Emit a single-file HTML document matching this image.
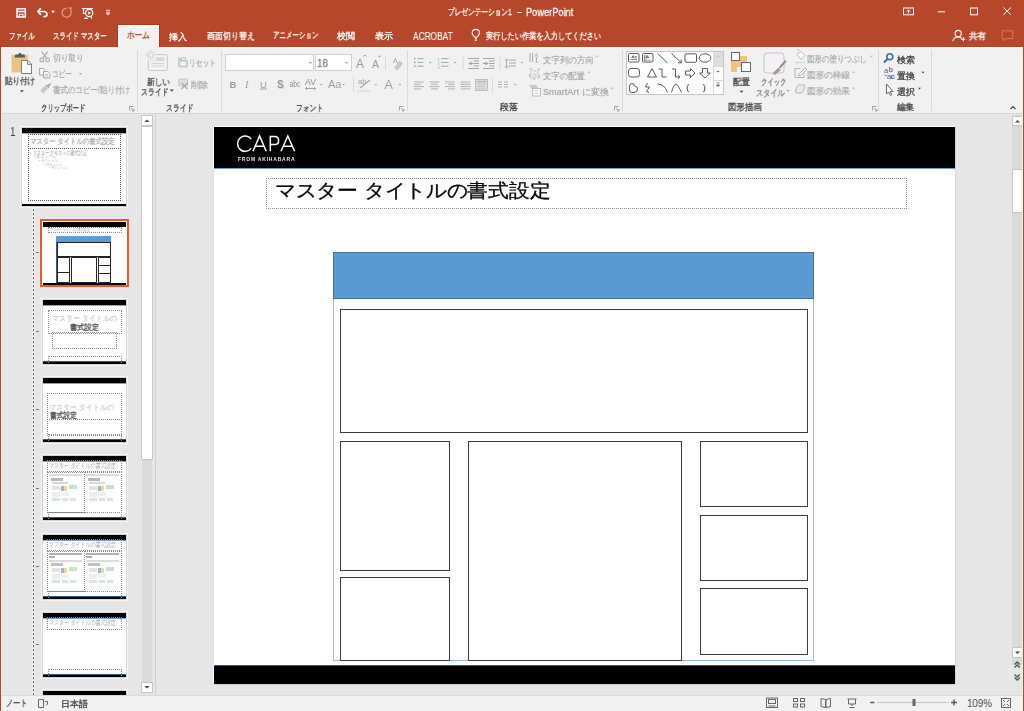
<!DOCTYPE html>
<html><head><meta charset="utf-8">
<style>
*{box-sizing:border-box}
html,body{margin:0;padding:0;width:1024px;height:711px;overflow:hidden;background:#e6e6e6;font-family:"Liberation Sans",sans-serif}
.a{position:absolute}
.t{position:absolute;white-space:nowrap;transform-origin:0 0;-webkit-text-stroke:0.3px currentColor;will-change:transform}
svg{position:absolute;overflow:visible;will-change:transform}
.bx{position:absolute;border:1px solid #3c3c3c;background:#fff}
.dot{position:absolute;border:1px dotted #8a8a8a}
.thumb{position:absolute;background:#fff;border:1px solid #d4d4d4;outline:1px solid #f4f4f4}
</style></head><body>
<!-- frame -->
<div class="a" style="left:0;top:0;width:1024px;height:47px;background:#b7472a"></div>
<div class="a" style="left:117px;top:24px;width:43px;height:23px;background:#a8391e"></div>
<div class="a" style="left:118px;top:25px;width:41px;height:22px;background:#fbfbfb"></div>
<div class="a" style="left:119px;top:26px;width:39px;height:22px;background:#f1f1f1"></div>
<div class="a" style="left:1px;top:47px;width:1022px;height:67px;background:#f1f1f1;border-top:1px solid #fbfbfb;border-bottom:1px solid #d5d5d5"></div>
<div class="a" style="left:119px;top:47px;width:39px;height:2px;background:#f1f1f1"></div>
<!-- group separators -->
<div class="a" style="left:137px;top:50px;width:1px;height:61px;background:#d9d9d9"></div>
<div class="a" style="left:221px;top:50px;width:1px;height:61px;background:#d9d9d9"></div>
<div class="a" style="left:407px;top:50px;width:1px;height:61px;background:#d9d9d9"></div>
<div class="a" style="left:622px;top:50px;width:1px;height:61px;background:#d9d9d9"></div>
<div class="a" style="left:878px;top:50px;width:1px;height:61px;background:#d9d9d9"></div>
<div class="a" style="left:931px;top:50px;width:1px;height:61px;background:#d9d9d9"></div>

<!-- left pane separator -->
<div class="a" style="left:155px;top:114px;width:1px;height:581px;background:#d0d0d0"></div>
<!-- left scrollbar -->
<div class="a" style="left:141px;top:115px;width:12px;height:578px;background:#dadada;border:1px solid #e6e6e6"></div>
<div class="a" style="left:141px;top:115px;width:12px;height:11px;background:#fff;border:1px solid #c6c6c6"></div>
<div class="a" style="left:141px;top:126px;width:12px;height:334px;background:#fff;border:1px solid #c6c6c6;border-radius:1px"></div>
<div class="a" style="left:141px;top:682px;width:12px;height:11px;background:#fff;border:1px solid #c6c6c6"></div>
<svg style="left:141px;top:115px" width="12" height="11"><path d="M3.5 7 L6 4.5 L8.5 7 Z" fill="#444"/></svg>
<svg style="left:141px;top:682px" width="12" height="11"><path d="M3.5 4 L6 6.5 L8.5 4 Z" fill="#444"/></svg>

<!-- right scrollbar -->
<div class="a" style="left:1012px;top:115px;width:11px;height:550px;background:#dadada"></div>
<div class="a" style="left:1012px;top:116px;width:11px;height:10px;background:#fff;border:1px solid #c6c6c6"></div>
<div class="a" style="left:1012px;top:169px;width:11px;height:44px;background:#fff;border:1px solid #c6c6c6"></div>
<div class="a" style="left:1012px;top:647px;width:11px;height:11px;background:#fff;border:1px solid #c6c6c6"></div>
<svg style="left:1012px;top:116px" width="11" height="10"><path d="M3 6.5 L5.5 4 L8 6.5 Z" fill="#444"/></svg>
<svg style="left:1012px;top:647px" width="11" height="11"><path d="M3 4.5 L5.5 7 L8 4.5 Z" fill="#444"/></svg>
<svg style="left:1012px;top:660px" width="11" height="30"><path d="M2.6 4.6 L5.2 2 L7.8 4.6 M2.6 7.6 L5.2 5 L7.8 7.6" stroke="#555" stroke-width="1.4" fill="none"/><path d="M2.6 14.4 L5.2 17 L7.8 14.4 M2.6 17.4 L5.2 20 L7.8 17.4" stroke="#555" stroke-width="1.4" fill="none"/></svg>


<!-- ===== main slide ===== -->
<div class="a" style="left:213px;top:126px;width:743px;height:559px;background:#d8d8d8"></div>
<div class="a" style="left:213px;top:126px;width:742px;height:558px;background:#fff"></div>
<div class="a" style="left:214px;top:127px;width:741px;height:41px;background:#000"></div>
<div class="a" style="left:214px;top:168px;width:741px;height:1px;background:#6d9bd0"></div>
<div class="a" style="left:214px;top:665px;width:741px;height:1px;background:#2f5b8a"></div>
<div class="a" style="left:213px;top:169px;width:1px;height:496px;background:#dcdcdc"></div>
<div class="a" style="left:214px;top:666px;width:741px;height:18px;background:#000"></div>
<svg style="left:230px;top:130px" width="80" height="36">
 <g stroke="#fff" stroke-width="1.5" fill="none" stroke-linejoin="miter">
  <path d="M21.2 9 A7.6 7.7 0 1 0 21.2 18.4"/>
  <path d="M23 21.3 L29.6 6 L36.2 21.3 M25.4 16.2 L33.8 16.2"/>
  <path d="M40.3 21.3 L40.3 6.4 L44.6 6.4 Q48.6 6.4 48.6 10.4 Q48.6 14.5 44.6 14.5 L40.3 14.5"/>
  <path d="M51 21.3 L57.8 6 L64.6 21.3 M53.5 16.2 L62.1 16.2"/>
 </g>
 <text x="8" y="31.2" font-family="Liberation Sans" font-size="5" font-weight="bold" fill="#e8e8e8" textLength="56.5" lengthAdjust="spacing">FROM AKIHABARA</text>
</svg>
<!-- title placeholder -->
<div class="dot" style="left:266px;top:178px;width:641px;height:31px"></div>
<!-- container -->
<div class="a" style="left:333px;top:252px;width:481px;height:409px;border:1px solid #9fb8d6;background:#fff"></div>
<div class="a" style="left:333px;top:252px;width:481px;height:47px;background:#5b9bd5;border:1px solid #41719c"></div>
<div class="bx" style="left:340px;top:309px;width:468px;height:124px"></div>
<div class="bx" style="left:340px;top:441px;width:110px;height:130px"></div>
<div class="bx" style="left:340px;top:577px;width:110px;height:84px"></div>
<div class="bx" style="left:468px;top:441px;width:214px;height:220px"></div>
<div class="bx" style="left:700px;top:441px;width:108px;height:66px"></div>
<div class="bx" style="left:700px;top:515px;width:108px;height:66px"></div>
<div class="bx" style="left:700px;top:588px;width:108px;height:67px"></div>

<!-- ===== thumbnails ===== -->
<!-- dotted connector -->
<div class="a" style="left:32px;top:208px;width:3px;height:487px;background-image:linear-gradient(#fafafa 75%,transparent 75%);background-size:3px 4px;opacity:.7"></div>
<div class="a" style="left:33px;top:209px;width:1px;height:486px;background-image:linear-gradient(#5a5a5a 50%,transparent 50%);background-size:1px 4px"></div>
<!-- master thumb -->
<div class="thumb" style="left:21px;top:127px;width:106px;height:80px"></div>
<div class="a" style="left:22px;top:128px;width:104px;height:5px;background:#000"></div>
<div class="a" style="left:22px;top:133px;width:104px;height:1px;background:#8fb0d8"></div>
<div class="a" style="left:22px;top:204px;width:104px;height:2px;background:#000"></div>
<div class="dot" style="left:28px;top:134px;width:93px;height:15px;border-color:#555"></div>
<div class="dot" style="left:28px;top:148px;width:93px;height:53px;border-color:#555"></div>

<!-- selected layout thumb -->
<div class="a" style="left:40px;top:219px;width:89px;height:68px;border:2px solid #e8582f;background:#fff"></div>
<div class="a" style="left:42px;top:221px;width:85px;height:64px;border:1px solid #fff"></div>
<div class="a" style="left:43px;top:222px;width:83px;height:5px;background:#000"></div>
<div class="dot" style="left:48px;top:227px;width:74px;height:6px;border-color:#888"></div>

<div class="a" style="left:56px;top:236px;width:55px;height:48px;border:1px solid #3a5f86;background:#fff"></div>
<div class="a" style="left:56px;top:236px;width:55px;height:6px;background:#5b9bd5"></div>
<div class="a" style="left:57px;top:242px;width:54px;height:15px;border:1px solid #222;background:#fff"></div>
<div class="a" style="left:57px;top:257px;width:13px;height:16px;border:1px solid #222"></div>
<div class="a" style="left:57px;top:272px;width:13px;height:11px;border:1px solid #222"></div>
<div class="a" style="left:71px;top:257px;width:26px;height:26px;border:1px solid #222"></div>
<div class="a" style="left:98px;top:257px;width:13px;height:9px;border:1px solid #222"></div>
<div class="a" style="left:98px;top:265px;width:13px;height:9px;border:1px solid #222"></div>
<div class="a" style="left:98px;top:273px;width:13px;height:10px;border:1px solid #222"></div>
<div class="a" style="left:43px;top:283px;width:83px;height:2px;background:#000"></div>

<div class="thumb" style="left:42px;top:299px;width:85px;height:66px"></div>
<div class="a" style="left:43px;top:300px;width:83px;height:5px;background:#000"></div>
<div class="a" style="left:43px;top:305px;width:83px;height:1px;background:#7aa3d4"></div>
<div class="a" style="left:43px;top:361px;width:83px;height:1px;background:#35557a"></div>
<div class="a" style="left:43px;top:362px;width:83px;height:2px;background:#000"></div>
<div class="dot" style="left:48px;top:356px;width:74px;height:7px;border-color:#888;border-bottom:none"></div>
<div class="dot" style="left:48px;top:310px;width:74px;height:24px;border-color:#888"></div>
<div class="dot" style="left:52px;top:332px;width:65px;height:17px;border-color:#888"></div>
<div class="thumb" style="left:42px;top:377px;width:85px;height:66px"></div>
<div class="a" style="left:43px;top:378px;width:83px;height:5px;background:#000"></div>
<div class="a" style="left:43px;top:383px;width:83px;height:1px;background:#7aa3d4"></div>
<div class="a" style="left:43px;top:439px;width:83px;height:1px;background:#35557a"></div>
<div class="a" style="left:43px;top:440px;width:83px;height:2px;background:#000"></div>
<div class="dot" style="left:48px;top:434px;width:74px;height:7px;border-color:#888;border-bottom:none"></div>
<div class="dot" style="left:47px;top:393px;width:75px;height:27px;border-color:#888"></div>
<div class="dot" style="left:47px;top:419px;width:75px;height:17px;border-color:#888"></div>
<div class="thumb" style="left:42px;top:455px;width:85px;height:66px"></div>
<div class="a" style="left:43px;top:456px;width:83px;height:5px;background:#000"></div>
<div class="a" style="left:43px;top:461px;width:83px;height:1px;background:#7aa3d4"></div>
<div class="a" style="left:43px;top:517px;width:83px;height:1px;background:#35557a"></div>
<div class="a" style="left:43px;top:518px;width:83px;height:2px;background:#000"></div>
<div class="dot" style="left:48px;top:512px;width:74px;height:7px;border-color:#888;border-bottom:none"></div>
<div class="dot" style="left:47px;top:460px;width:75px;height:12px;border-color:#888"></div>
<div class="dot" style="left:47px;top:472px;width:38px;height:41px;border-color:#888"></div>
<div class="dot" style="left:84px;top:472px;width:38px;height:41px;border-color:#888"></div>
<div class="a" style="left:49px;top:474px;width:33px;height:2px;background:#dedede"></div>
<div class="a" style="left:51px;top:478px;width:12px;height:3px;background:#b8b8b8"></div>
<div class="a" style="left:52px;top:482px;width:16px;height:2px;background:#d8d8d8"></div>
<div class="a" style="left:52px;top:486px;width:8px;height:4px;background:#e3e3e3"></div>
<div class="a" style="left:61px;top:486px;width:3px;height:5px;background:#9db4d9"></div>
<div class="a" style="left:64px;top:486px;width:3px;height:5px;background:#f0d89c"></div>
<div class="a" style="left:69px;top:485px;width:8px;height:4px;background:#c4e2cd"></div>
<div class="a" style="left:52px;top:492px;width:8px;height:5px;background:#eeeeee"></div>
<div class="a" style="left:61px;top:492px;width:8px;height:4px;background:#f0f0f0"></div>
<div class="a" style="left:52px;top:498px;width:8px;height:3px;background:#d9e4f3"></div>
<div class="a" style="left:62px;top:498px;width:6px;height:3px;background:#d9e4f3"></div>
<div class="a" style="left:70px;top:498px;width:6px;height:3px;background:#d9e4f3"></div>
<div class="a" style="left:86px;top:474px;width:33px;height:2px;background:#dedede"></div>
<div class="a" style="left:88px;top:478px;width:12px;height:3px;background:#b8b8b8"></div>
<div class="a" style="left:89px;top:482px;width:16px;height:2px;background:#d8d8d8"></div>
<div class="a" style="left:89px;top:486px;width:8px;height:4px;background:#e3e3e3"></div>
<div class="a" style="left:98px;top:486px;width:3px;height:5px;background:#9db4d9"></div>
<div class="a" style="left:101px;top:486px;width:3px;height:5px;background:#f0d89c"></div>
<div class="a" style="left:106px;top:485px;width:8px;height:4px;background:#c4e2cd"></div>
<div class="a" style="left:89px;top:492px;width:8px;height:5px;background:#eeeeee"></div>
<div class="a" style="left:98px;top:492px;width:8px;height:4px;background:#f0f0f0"></div>
<div class="a" style="left:89px;top:498px;width:8px;height:3px;background:#d9e4f3"></div>
<div class="a" style="left:99px;top:498px;width:6px;height:3px;background:#d9e4f3"></div>
<div class="a" style="left:107px;top:498px;width:6px;height:3px;background:#d9e4f3"></div>
<div class="thumb" style="left:42px;top:534px;width:85px;height:66px"></div>
<div class="a" style="left:43px;top:535px;width:83px;height:5px;background:#000"></div>
<div class="a" style="left:43px;top:540px;width:83px;height:1px;background:#7aa3d4"></div>
<div class="a" style="left:43px;top:596px;width:83px;height:1px;background:#35557a"></div>
<div class="a" style="left:43px;top:597px;width:83px;height:2px;background:#000"></div>
<div class="dot" style="left:48px;top:591px;width:74px;height:7px;border-color:#888;border-bottom:none"></div>
<div class="dot" style="left:47px;top:539px;width:75px;height:12px;border-color:#888"></div>
<div class="dot" style="left:47px;top:551px;width:38px;height:41px;border-color:#888"></div>
<div class="dot" style="left:84px;top:551px;width:38px;height:41px;border-color:#888"></div>
<div class="a" style="left:49px;top:553px;width:33px;height:2px;background:#b0b0b0"></div>
<div class="a" style="left:49px;top:556px;width:6px;height:2px;background:#b0b0b0"></div>
<div class="a" style="left:49px;top:560px;width:33px;height:2px;background:#dcdcdc"></div>
<div class="a" style="left:51px;top:563px;width:12px;height:3px;background:#c0c0c0"></div>
<div class="a" style="left:52px;top:568px;width:8px;height:4px;background:#e3e3e3"></div>
<div class="a" style="left:61px;top:568px;width:3px;height:5px;background:#9db4d9"></div>
<div class="a" style="left:64px;top:568px;width:3px;height:5px;background:#f0d89c"></div>
<div class="a" style="left:69px;top:567px;width:8px;height:4px;background:#c4e2cd"></div>
<div class="a" style="left:52px;top:574px;width:8px;height:5px;background:#eeeeee"></div>
<div class="a" style="left:61px;top:574px;width:8px;height:4px;background:#f0f0f0"></div>
<div class="a" style="left:52px;top:580px;width:8px;height:3px;background:#d9e4f3"></div>
<div class="a" style="left:62px;top:580px;width:6px;height:3px;background:#d9e4f3"></div>
<div class="a" style="left:70px;top:580px;width:6px;height:3px;background:#d9e4f3"></div>
<div class="a" style="left:86px;top:553px;width:33px;height:2px;background:#b0b0b0"></div>
<div class="a" style="left:86px;top:556px;width:6px;height:2px;background:#b0b0b0"></div>
<div class="a" style="left:86px;top:560px;width:33px;height:2px;background:#dcdcdc"></div>
<div class="a" style="left:88px;top:563px;width:12px;height:3px;background:#c0c0c0"></div>
<div class="a" style="left:89px;top:568px;width:8px;height:4px;background:#e3e3e3"></div>
<div class="a" style="left:98px;top:568px;width:3px;height:5px;background:#9db4d9"></div>
<div class="a" style="left:101px;top:568px;width:3px;height:5px;background:#f0d89c"></div>
<div class="a" style="left:106px;top:567px;width:8px;height:4px;background:#c4e2cd"></div>
<div class="a" style="left:89px;top:574px;width:8px;height:5px;background:#eeeeee"></div>
<div class="a" style="left:98px;top:574px;width:8px;height:4px;background:#f0f0f0"></div>
<div class="a" style="left:89px;top:580px;width:8px;height:3px;background:#d9e4f3"></div>
<div class="a" style="left:99px;top:580px;width:6px;height:3px;background:#d9e4f3"></div>
<div class="a" style="left:107px;top:580px;width:6px;height:3px;background:#d9e4f3"></div>
<div class="thumb" style="left:42px;top:612px;width:85px;height:66px"></div>
<div class="a" style="left:43px;top:613px;width:83px;height:5px;background:#000"></div>
<div class="a" style="left:43px;top:618px;width:83px;height:1px;background:#7aa3d4"></div>
<div class="a" style="left:43px;top:674px;width:83px;height:1px;background:#35557a"></div>
<div class="a" style="left:43px;top:675px;width:83px;height:2px;background:#000"></div>
<div class="dot" style="left:48px;top:669px;width:74px;height:7px;border-color:#888;border-bottom:none"></div>
<div class="dot" style="left:47px;top:617px;width:75px;height:13px;border-color:#888"></div>
<div class="thumb" style="left:42px;top:690px;width:85px;height:10px"></div>
<div class="a" style="left:43px;top:691px;width:83px;height:5px;background:#000"></div>
<div class="a" style="left:43px;top:696px;width:83px;height:1px;background:#7aa3d4"></div>
<div class="a" style="left:36px;top:252px;width:3px;height:1px;background:#777"></div><div class="a" style="left:36px;top:331px;width:3px;height:1px;background:#777"></div><div class="a" style="left:36px;top:409px;width:3px;height:1px;background:#777"></div><div class="a" style="left:36px;top:488px;width:3px;height:1px;background:#777"></div><div class="a" style="left:36px;top:566px;width:3px;height:1px;background:#777"></div><div class="a" style="left:36px;top:644px;width:3px;height:1px;background:#777"></div>
<!-- status bar -->
<div class="a" style="left:1px;top:695px;width:1022px;height:16px;background:#f1f1f1;border-top:1px solid #d9d9d9"></div>

<!-- QAT -->
<svg style="left:0;top:0" width="130" height="24">
 <g fill="none" stroke="#fff" stroke-width="1.5">
  <path d="M17 8.8 H25.3 V16.9 H17 Z"/>
  <path d="M17 11.5 H25.3"/>
 </g>
 <path d="M19.3 17 V14.3 H23 V17" fill="none" stroke="#fff" stroke-width="1.1"/>
 <g fill="none" stroke="#fff" stroke-width="1.7" stroke-linecap="round">
  <path d="M37.8 11.5 L40.5 8.6 M37.8 11.5 L40.5 14.3 M38.2 11.5 H43.5 Q47 11.5 47 14.2 Q47 16.6 44 16.6"/>
 </g>
 <path d="M51 10.8 H55 L53 13.2 Z" fill="#fff"/>
 <g fill="none" stroke="#d99580" stroke-width="1.4">
  <path d="M70.6 10.6 A4.5 4.5 0 1 1 66.8 8.2"/>
  <path d="M68.3 8 H71 V10.7"/>
 </g>
 <g fill="none" stroke="#fff" stroke-width="1.2">
  <path d="M82 8.6 H93"/>
  <path d="M83.5 8.6 V13.3 H85.5"/>
  <circle cx="89.2" cy="13" r="3.6"/>
  <path d="M86.5 17.5 L85 18.6 M84 18.5 H88 M90.7 16.5 L92 18.5"/>
 </g>
 <path d="M88.3 11.2 L91 13 L88.3 14.8 Z" fill="#fff"/>
 <path d="M106 10.3 H110 M106 12.2 H110" stroke="#f3d4ca" stroke-width="1"/>
 <path d="M105.8 13.3 H110.2 L108 15.3 Z" fill="#fff"/>
</svg>
<!-- window controls -->
<svg style="left:890px;top:0" width="134" height="47">
 <g fill="none" stroke="#fff" stroke-width="1">
  <rect x="13.5" y="8" width="10" height="6.8"/>
  <path d="M18.5 13.5 V10 M16.8 11.6 L18.5 9.9 L20.2 11.6"/>
  <path d="M47.8 11.8 H55"/>
  <rect x="80.5" y="8" width="7" height="6.8"/>
  <path d="M113.3 7.5 L121 14.9 M121 7.5 L113.3 14.9"/>
 </g>
 <g fill="none" stroke="#fff" stroke-width="1.1">
  <circle cx="68.2" cy="33.5" r="3.1"/>
  <path d="M62.9 41.2 Q63.5 37 68.2 37 Q70.5 37 71.8 38.3"/>
  <path d="M71.3 39.3 H75.3 M73.3 37.3 V41.3"/>
 </g>
 <path d="M112.2 30.8 H122.8 V38.6 H116 L113.5 40.6 V38.6 H112.2 Z" fill="none" stroke="#d27b65" stroke-width="1"/>
</svg>
<!-- lightbulb -->
<svg style="left:470px;top:26px" width="16" height="18">
 <g fill="none" stroke="#fff" stroke-width="1.1">
  <path d="M5.2 11.4 Q2.2 9.6 2.2 6.8 Q2.2 3.4 5.8 3.4 Q9.4 3.4 9.4 6.8 Q9.4 9.6 6.4 11.4 Z"/>
  <path d="M4.6 12.8 H7 M4.6 14.2 H7"/>
 </g>
</svg>

<!-- ===== Clipboard group ===== -->
<svg style="left:0;top:47px" width="140" height="66">
 <rect x="11.5" y="7.8" width="16.5" height="17.6" fill="#eac37a" stroke="#e8e0cc" stroke-width=".5"/>
 <path d="M14.8 10.5 H25 V9 Q25 7.6 23.5 7.6 H21.5 Q21.3 5.8 19.9 5.8 Q18.5 5.8 18.3 7.6 H16.3 Q14.8 7.6 14.8 9 Z" fill="#5a5a5a"/>
 <path d="M21.6 13.5 H28 L31.5 17 V26.5 H21.6 Z" fill="#fff" stroke="#7a7a7a" stroke-width="1"/>
 <path d="M27.6 13.5 V17.3 H31.5" fill="none" stroke="#7a7a7a" stroke-width="1"/>
 <path d="M20 43.3 H23.8 L21.9 45.5 Z" fill="#444"/>
 <!-- scissors -->
 <g fill="none" stroke="#a9a9a9" stroke-width="1.1">
  <circle cx="41.8" cy="12.9" r="1.9"/><circle cx="47.6" cy="12.9" r="1.9"/>
  <path d="M42.8 11.2 L47.8 4.6 M46.6 11.2 L41.6 4.6"/>
 </g>
 <!-- copy -->
 <g fill="#f6f6f6" stroke="#ababab" stroke-width="1">
  <path d="M39.5 21.5 H43.5 L45 23 V28 H39.5 Z"/>
  <path d="M43.5 24.5 H47.8 L49.8 26.5 V31 H43.5 Z"/>
 </g>
 <path d="M45 27.5 H48 M45 29.2 H48" stroke="#bdbdbd" stroke-width=".8"/>
 <path d="M78.5 26 H82.5 L80.5 28 Z" fill="#bbb"/>
 <!-- format painter -->
 <path d="M40.2 43.5 L45.2 38.3 L48.3 41.3 L43.2 46.8 Z" fill="#c9c9c9"/>
 <path d="M45.5 38 L49.5 37.2 L49 41.5" fill="#b0b0b0"/>
 <path d="M47.5 39.5 L50.8 36.5" stroke="#a0a0a0" stroke-width="1.4"/>
 <!-- launcher -->
 <g fill="none" stroke="#9a9a9a" stroke-width=".9"><path d="M129.5 63.5 V59.5 H133.5"/><path d="M131 61 L134 64 M134 62 V64 H132"/></g>
</svg>

<!-- ===== Slides group ===== -->
<svg style="left:140px;top:47px" width="82" height="66">
 <rect x="8.3" y="7.6" width="19" height="15.8" rx="1.2" fill="#f7f1f7" stroke="#c9c5c9" stroke-width="1"/>
 <rect x="11.5" y="10.4" width="13" height="3.6" fill="#d9d6d9"/>
 <path d="M11.5 16.6 H24.5 M11.5 19 H24.5" stroke="#d4cfd4" stroke-width="1"/>
 <rect x="5" y="2.5" width="11" height="11" fill="#f1f1f1"/><g stroke="#c4c4c4" stroke-width=".9"><path d="M10.5 3 V13 M5.5 8 H15.5 M7 4.5 L14 11.5 M14 4.5 L7 11.5"/></g>
 <circle cx="10.5" cy="8" r="2" fill="#f1f1f1" stroke="#d8d8d8" stroke-width=".6"/>
 <path d="M29.8 42.6 H33.8 L31.8 44.8 Z" fill="#444"/>
 <!-- reset -->
 <g fill="#dcdcdc" stroke="#b8b8b8" stroke-width=".9">
  <rect x="38.5" y="13.5" width="9" height="6.4" rx="1"/>
 </g>
 <path d="M39 12.5 Q41.5 9.8 45 11 L46.5 12" fill="none" stroke="#b5b5b5" stroke-width="1"/>
 <path d="M38 10 L39.2 13 L42 12.2" fill="none" stroke="#b5b5b5" stroke-width="1"/>
 <rect x="41" y="15" width="4" height="3.5" fill="#f4f4f4"/>
 <!-- delete -->
 <rect x="38.6" y="32" width="9" height="7" rx="1" fill="#dedede" stroke="#c2c2c2" stroke-width=".9"/>
 <path d="M41.5 36 L47.5 42 M47.5 36 L41.5 42" stroke="#a8a8a8" stroke-width="1.2"/>
</svg>

<!-- ===== Font group ===== -->
<div class="a" style="left:225px;top:54px;width:89px;height:17px;background:#fff;border:1px solid #d1d1d1"></div>
<div class="a" style="left:315px;top:54px;width:37px;height:17px;background:#fff;border:1px solid #d1d1d1"></div>
<svg style="left:222px;top:47px" width="186" height="66">
 <path d="M86.5 15 H90.5 L88.5 17 Z M122.5 15 H126.5 L124.5 17 Z" fill="#b0b0b0"/>
 <!-- grow/shrink -->
 <text x="134" y="20.5" font-family="Liberation Sans" font-size="12" fill="#9a9a9a">A</text>
 <path d="M141.5 9.5 L143 8 L144.5 9.5" fill="none" stroke="#9a9a9a" stroke-width=".9"/>
 <text x="150" y="20.5" font-family="Liberation Sans" font-size="10.5" fill="#9a9a9a">A</text>
 <path d="M156 8.8 H159 L157.5 10.5 Z" fill="#9a9a9a"/>
 <path d="M163.5 10 V23" stroke="#d9d9d9" stroke-width="1"/>
 <!-- clear formatting -->
 <text x="171" y="16" font-family="Liberation Sans" font-size="7" fill="#a0a0a0">A</text>
 <path d="M172 21 L177.5 13.5 L181 16.5 L175.5 23.5 Z" fill="#c9c9c9"/>
 <!-- row 2 -->
 <text x="7.5" y="40.5" font-family="Liberation Sans" font-size="9.5" font-weight="bold" fill="#9c9c9c">B</text>
 <text x="23" y="40.5" font-family="Liberation Serif" font-size="10.5" font-style="italic" fill="#a0a0a0">I</text>
 <text x="38" y="40.5" font-family="Liberation Sans" font-size="9.5" fill="#9c9c9c">U</text>
 <path d="M38 42 H45" stroke="#8f8f8f" stroke-width=".8"/>
 <text x="55.8" y="41.6" font-family="Liberation Sans" font-size="10" font-weight="bold" fill="#d4d4d4">S</text>
 <text x="55" y="40.5" font-family="Liberation Sans" font-size="10" font-weight="bold" fill="#9c9c9c">S</text>
 <text x="67.5" y="40" font-family="Liberation Sans" font-size="9" fill="#909090" textLength="11" lengthAdjust="spacingAndGlyphs">abc</text>
 <text x="83" y="38" font-family="Liberation Sans" font-size="8.5" fill="#909090" textLength="11" lengthAdjust="spacingAndGlyphs">AV</text>
 <path d="M83.5 41.5 H93.5 M85 40 L83.5 41.5 L85 43 M92 40 L93.5 41.5 L92 43" fill="none" stroke="#909090" stroke-width=".8"/>
 <path d="M97.5 37 H100.5 L99 38.6 Z M120 37 H123 L121.5 38.6 Z M152.3 37 H155.3 L153.8 38.6 Z M176.5 37 H179.5 L178 38.6 Z" fill="#a8a8a8"/>
 <text x="106" y="40.5" font-family="Liberation Sans" font-size="11" fill="#a0a0a0">Aa</text>
 <path d="M131.5 30 V45" stroke="#d9d9d9" stroke-width="1"/>
 <text x="136" y="37" font-family="Liberation Sans" font-size="7.5" fill="#a0a0a0">ab</text>
 <path d="M138 41 L148 33" stroke="#a8a8a8" stroke-width="1.3"/>
 <path d="M136 44 H148" stroke="#e8d3e8" stroke-width="1.4"/>
 <text x="162.5" y="42" font-family="Liberation Sans" font-size="12.5" fill="#a0a0a0">A</text>
 <g fill="none" stroke="#9a9a9a" stroke-width=".9"><path d="M177.5 63.5 V59.5 H181.5"/><path d="M179 61 L182 64 M182 62 V64 H180"/></g>
</svg>

<!-- ===== Paragraph group ===== -->
<svg style="left:405px;top:47px" width="220" height="66">
 <g transform="translate(0,4)">
 <g fill="#a6a6a6">
  <rect x="9" y="6.8" width="1.6" height="1.6"/><rect x="9" y="10.6" width="1.6" height="1.6"/><rect x="9" y="14.4" width="1.6" height="1.6"/>
 </g>
 <path d="M12.5 7.6 H18.5 M12.5 11.4 H18.5 M12.5 15.2 H18.5" stroke="#a6a6a6" stroke-width="1"/>
 <path d="M23.8 11 H26.8 L25.3 12.6 Z M48.5 11 H51.5 L50 12.6 Z M115.5 11 H118.5 L117 12.6 Z" fill="#a8a8a8"/>
 <text x="32.5" y="9.5" font-family="Liberation Sans" font-size="3.8" fill="#a6a6a6">1</text>
 <text x="32.5" y="13.5" font-family="Liberation Sans" font-size="3.8" fill="#a6a6a6">2</text>
 <text x="32.5" y="17.5" font-family="Liberation Sans" font-size="3.8" fill="#a6a6a6">3</text>
 <path d="M36 7.6 H43.5 M36 11.4 H43.5 M36 15.2 H43.5" stroke="#a6a6a6" stroke-width="1"/>
 <path d="M58 4 V19 M95 4 V19" stroke="#d9d9d9" stroke-width="1"/>
 <!-- indents -->
 <path d="M63 7.5 H74 M68.5 10 H74 M68.5 12.5 H74 M68.5 15 H74 M63 17.5 H74" stroke="#a6a6a6" stroke-width="1"/>
 <path d="M66.5 10.5 L63.5 12.5 L66.5 14.5 Z" fill="#a0a0a0"/><path d="M64.5 12.5 H68" stroke="#a0a0a0" stroke-width="1.1"/>
 <path d="M78 7.5 H89.5 M84 10 H89.5 M84 12.5 H89.5 M84 15 H89.5 M78 17.5 H89.5" stroke="#a6a6a6" stroke-width="1"/>
 <path d="M80.5 10.5 L83.5 12.5 L80.5 14.5 Z" fill="#a0a0a0"/><path d="M78 12.5 H81" stroke="#a0a0a0" stroke-width="1.1"/>
 <!-- line spacing -->
 <path d="M104 9 H111 M104 12 H111 M104 15 H111" stroke="#a6a6a6" stroke-width="1"/>
 <path d="M101.5 8.5 V16.5 M100 9.8 L101.5 7.8 L103 9.8 M100 15.2 L101.5 17.2 L103 15.2" fill="none" stroke="#a6a6a6" stroke-width=".9"/>
  </g>
 <!-- row 2 aligns -->
 <path d="M9 35 H19 M9 37.3 H16 M9 39.6 H19 M9 41.9 H16" stroke="#b0b0b0" stroke-width="1"/>
 <path d="M24.5 35 H34.5 M26 37.3 H33 M24.5 39.6 H34.5 M26 41.9 H33" stroke="#b0b0b0" stroke-width="1"/>
 <path d="M40 35 H50 M43 37.3 H50 M40 39.6 H50 M43 41.9 H50" stroke="#b0b0b0" stroke-width="1"/>
 <path d="M55.5 35 H65.5 M55.5 37.3 H65.5 M55.5 39.6 H65.5 M55.5 41.9 H65.5" stroke="#b0b0b0" stroke-width="1"/>
 <rect x="70.5" y="32.5" width="12" height="11" fill="#dcdcdc" stroke="#b5b5b5" stroke-width=".8"/>
 <path d="M72.5 37 H80.5 M72.5 39.5 H80.5 M72.5 42 H80.5" stroke="#c0c0c0" stroke-width=".8"/>
 <path d="M72.5 34.6 H80.5 M73.5 33.6 L72.5 34.6 L73.5 35.6 M79.5 33.6 L80.5 34.6 L79.5 35.6" stroke="#a0a0a0" stroke-width=".7" fill="none"/>
 <path d="M93 35 H97 M99 35 H103 M93 37.5 H97 M99 37.5 H103 M93 40 H97 M99 40 H103" stroke="#b0b0b0" stroke-width="1"/>
 <path d="M108.8 37 H111.8 L110.3 38.6 Z" fill="#a8a8a8"/>
 <path d="M87.5 31 V46" stroke="#d9d9d9" stroke-width="1"/>
 <!-- text direction -->
 <path d="M125 6 V15 M127.5 6 V15 M131.5 10 V15" stroke="#b0b0b0" stroke-width="1.1"/>
 <text x="129.5" y="10" font-family="Liberation Sans" font-size="6" fill="#a8a8a8">A</text>
 <path d="M131 15 V16 M133 15 V16" stroke="#b0b0b0" stroke-width=".9"/>
 <!-- align text -->
 <rect x="124.5" y="22" width="10" height="10" fill="none" stroke="#b8b8b8" stroke-width="1" stroke-dasharray="3 5"/>
 <path d="M126 22 V32 M133 22 V32" stroke="#c8c8c8" stroke-width="1"/>
 <path d="M127.5 27 H131.5 M127.5 29 H131.5" stroke="#c0c0c0" stroke-width=".8"/>
 <path d="M128.3 24.5 L129.5 23.2 L130.7 24.5 M128.3 30.5 L129.5 31.8 L130.7 30.5" fill="none" stroke="#a8a8a8" stroke-width=".8"/>
 <!-- smartart -->
 <path d="M124 38 H131 L134 42 H127 Z" fill="#c8c8c8"/>
 <rect x="127.5" y="41.5" width="8" height="7.5" fill="#f6f6f6" stroke="#b8b8b8" stroke-width=".9"/>
 <path d="M130 44 H133 M130 46.5 H133" stroke="#c8c8c8" stroke-width=".8"/>
 <path d="M190.5 8.8 H193.5 L192 10.4 Z M182.5 24.8 H185.5 L184 26.4 Z M205.5 40.8 H208.5 L207 42.4 Z" fill="#b8b8b8"/>
 <g fill="none" stroke="#9a9a9a" stroke-width=".9"><path d="M209.5 63.5 V59.5 H213.5"/><path d="M211 61 L214 64 M214 62 V64 H212"/></g>
</svg>

<!-- ===== Drawing group ===== -->
<div class="a" style="left:626px;top:51px;width:98px;height:44px;background:#fff;border:1px solid #c6c6c6"></div>
<div class="a" style="left:714px;top:52px;width:9px;height:14px;background:#dedede"></div>
<div class="a" style="left:713px;top:52px;width:1px;height:42px;background:#dadada"></div>
<div class="a" style="left:714px;top:66px;width:9px;height:1px;background:#dadada"></div>
<div class="a" style="left:714px;top:80px;width:9px;height:1px;background:#dadada"></div>
<svg style="left:620px;top:47px" width="260" height="66">
 <path d="M96 10 L98 8.5 L100 10" fill="none" stroke="#c0c0c0" stroke-width=".8"/>
 <path d="M96.5 24 H99.5 L98 25.6 Z" fill="#555"/>
 <path d="M96.5 36 H99.5 M96.5 38 H99.5 L98 39.6 Z" stroke="#555" stroke-width=".7" fill="#555"/>
 <g fill="none" stroke="#5a5a5a" stroke-width="1">
  <rect x="8.5" y="6.5" width="10.5" height="8.5" rx="1"/>
  <rect x="22.5" y="6.5" width="10.5" height="8.5" rx="1"/>
  <path d="M37.5 6.5 L47.5 16 M51.5 6.5 L61 15.5 M58 15.8 H61.3 V12.5"/>
  <rect x="65" y="6.8" width="11.5" height="8.5" rx="1"/>
  <ellipse cx="85" cy="11" rx="5.8" ry="4.2"/>
  <rect x="8.5" y="21.5" width="11" height="8.5" rx="2.5"/>
  <path d="M27.5 30 L32 21.5 L36.5 30 Z"/>
  <path d="M38.5 22 H42 V30 H46.5"/>
  <path d="M52 22 H55.5 V30 H59.5 M58 28.3 L60 30 L58 31.7"/>
  <path d="M65.5 24 H70.5 V21.5 L75 26 L70.5 30.5 V28 H65.5 Z"/>
  <path d="M82.5 21.5 H87.5 V26 H90.5 L85 31 L79.5 26 H82.5 Z"/>
  <path d="M9.5 43 V39 Q9.5 36.5 12 36.5 Q14.5 36.5 14.5 39 Q17.5 39 17.5 42 Q17.5 45.5 14 45.5 H12 Q9.5 45.5 9.5 43 Z"/>
  <path d="M27.5 36 L25.5 40 L29.5 40 L26.5 44.5 L29 45.5"/>
  <path d="M37.5 37 Q44.5 37 47.5 45.5"/>
  <path d="M51.5 45.5 Q54 36.5 56 37 Q58 37.5 61.5 45.5"/>
  <path d="M69 37.5 Q67.5 37.5 67.5 39.5 V40.5 L66.5 41 L67.5 41.5 V43 Q67.5 45 69 45"/>
  <path d="M83 37.5 Q84.5 37.5 84.5 39.5 V40.5 L85.5 41 L84.5 41.5 V43 Q84.5 45 83 45"/>
 </g>
 <g fill="#4a86c8"><path d="M11 11 L13 8 L15 11 Z"/><path d="M25.5 11 L27.5 8 L29.5 11 Z"/></g>
 <path d="M10.5 12.5 H17 M15 9.5 H17 M15 11 H17" stroke="#5a5a5a" stroke-width=".7"/>
 <path d="M24.5 8 V14 M26 8 V14 M28 12.5 V14 M30 12.5 V14" stroke="#5a5a5a" stroke-width=".7"/>
 <!-- arrange -->
 <rect x="116" y="9" width="11" height="11" fill="#eec679"/>
 <rect x="111" y="14" width="6" height="11" fill="#eec679"/>
 <rect x="111.5" y="5.5" width="8" height="8" fill="#fff" stroke="#666" stroke-width="1"/>
 <rect x="121.5" y="15.5" width="9" height="9" fill="#fff" stroke="#666" stroke-width="1"/>
 <path d="M119.5 43.8 H123.5 L121.5 45.8 Z" fill="#444"/>
 <!-- quick styles -->
 <rect x="144" y="6" width="20" height="20" rx="3" fill="#f6f1f6" stroke="#c4c4c4" stroke-width="1"/>
 <path d="M152.5 26.5 L158.5 20.5 L161 23 L155 28 Z" fill="#9e9e9e"/>
 <path d="M159 20 L165 13 L166.5 14.5 L160.5 21.5 Z" fill="#8e8e8e"/>
 <path d="M166.5 43 H169.5 L168 44.6 Z" fill="#888"/>
 <!-- fill -->
 <path d="M177 7.5 L181 4.5 L185 8.5 L181 12.5 Z" fill="#fff" stroke="#b8b8b8" stroke-width="1"/>
 <path d="M178.5 4 Q178.5 2 177 2.5" fill="none" stroke="#b8b8b8" stroke-width=".9"/>
 <path d="M175 15.5 H185" stroke="#e3cfe3" stroke-width="1.4"/>
 <!-- outline -->
 <path d="M175 21.5 H180 M175 21.5 V30.5 H184 V26" fill="none" stroke="#b5b5b5" stroke-width="1"/>
 <path d="M179 27 L185 21 L186.5 22.5 L180.5 28.5 L178.5 29 Z" fill="#fff" stroke="#a8a8a8" stroke-width=".9"/>
 <!-- effects -->
 <path d="M175.5 43 L177.5 39 Q178 38 179 38 H184 Q185.5 38 185 39.5 L183 44.5 Q182.5 46 181 46 H177 Q175 46 175.5 43 Z" fill="#e9e9e9" stroke="#b5b5b5" stroke-width="1"/>
 <path d="M250 8.8 H253 L251.5 10.4 Z M232 24.8 H235 L233.5 26.4 Z M232 40.8 H235 L233.5 42.4 Z" fill="#b8b8b8"/>
 <g fill="none" stroke="#9a9a9a" stroke-width=".9"><path d="M252.5 63.5 V59.5 H256.5"/><path d="M254 61 L257 64 M257 62 V64 H255"/></g>
</svg>

<!-- ===== Editing group ===== -->
<svg style="left:878px;top:47px" width="146" height="66">
 <circle cx="11.8" cy="9.8" r="3" fill="none" stroke="#2f6db5" stroke-width="1.6"/>
 <path d="M9.5 12 L6.5 15" stroke="#2f6db5" stroke-width="2" stroke-linecap="round"/>
 <text x="6" y="26" font-family="Liberation Sans" font-size="7.5" fill="#555">a</text>
 <text x="10.5" y="25" font-family="Liberation Sans" font-size="7.5" font-weight="bold" fill="#8e5fb8">b</text>
 <text x="9" y="31.5" font-family="Liberation Sans" font-size="7.5" fill="#555">a</text>
 <text x="12.5" y="31.5" font-family="Liberation Sans" font-size="8" font-weight="bold" fill="#2f6db5">c</text>
 <path d="M6.5 27.8 L7.8 29 L9 27.8" fill="none" stroke="#2f6db5" stroke-width=".9"/>
 <path d="M43.5 24.8 H46.5 L45 26.4 Z M40 40.8 H43 L41.5 42.4 Z" fill="#444"/>
 <path d="M8.5 37 V47 L10.5 45 L12.5 48.5 L13.8 47.8 L12 44.5 H15 Z" fill="#fff" stroke="#666" stroke-width="1" stroke-linejoin="round"/>
 <path d="M132.5 62 L135 59.5 L137.5 62" fill="none" stroke="#444" stroke-width="1.2"/>
</svg>

<!-- ===== status bar icons ===== -->
<svg style="left:0;top:695px" width="1024" height="16">
 <g fill="none" stroke="#666" stroke-width="1">
  <path d="M38.5 4.5 H43.5 V12.5 H38.5 Z M45 6.5 H47.5 V9 L46 10.5"/>
  <rect x="766.5" y="3" width="11" height="9.5"/>
  <rect x="768.5" y="4.5" width="7" height="4"/>
  <path d="M768.5 11 H775.5"/>
  <rect x="793.5" y="3.5" width="4" height="3"/><rect x="800.5" y="3.5" width="4" height="3"/>
  <rect x="793.5" y="9" width="4" height="3"/><rect x="800.5" y="9" width="4" height="3"/>
  <path d="M821 3.5 L825.5 4.5 V12.5 L821 11.5 Z M830.5 3.5 L826 4.5 V12.5 L830.5 11.5 Z"/>
  <path d="M847.5 4 H856.5 M848.5 4 V9 H855.5 V4 M852 9 V11 M849.5 12.5 H854.5"/>
  <rect x="1001.5" y="3.5" width="9" height="9"/>
 </g>
 <path d="M870.3 7.5 H874.3 M951 7.5 H957 M954 4.5 V10.5" stroke="#555" stroke-width="1.4"/>
 <path d="M877 7.5 H949" stroke="#c6c6c6" stroke-width="1"/>
 <rect x="912.5" y="4" width="3" height="7" fill="#666"/>
 <path d="M1003 5 L1005 7 M1009 5 L1007 7 M1003 11 L1005 9 M1009 11 L1007 9" stroke="#666" stroke-width="1"/>
</svg>


<div class="t" style="left:448.26px;top:8px;font-size:9px;line-height:9px;color:#ffffff;transform:scaleX(0.741);-webkit-text-stroke:0.3px currentColor">プレゼンテーション1</div>
<div class="t" style="left:517.00px;top:8px;font-size:9px;line-height:9px;color:#ffffff;transform:scaleX(1.667);-webkit-text-stroke:0.3px currentColor">-</div>
<div class="t" style="left:526.16px;top:7px;font-size:11px;line-height:11px;color:#ffffff;transform:scaleX(0.839);-webkit-text-stroke:0.3px currentColor">PowerPoint</div>
<div class="t" style="left:9.29px;top:32px;font-size:9px;line-height:9px;color:#ffffff;transform:scaleX(0.714);-webkit-text-stroke:0.3px currentColor">ファイル</div>
<div class="t" style="left:53.28px;top:32px;font-size:9px;line-height:9px;color:#ffffff;transform:scaleX(0.716);-webkit-text-stroke:0.3px currentColor">スライド マスター</div>
<div class="t" style="left:127.00px;top:31px;font-size:9px;line-height:9px;color:#b7472a;transform:scaleX(0.846);">ホーム</div>
<div class="t" style="left:169.00px;top:33px;font-size:9px;line-height:9px;color:#ffffff;-webkit-text-stroke:0.3px currentColor">挿入</div>
<div class="t" style="left:207.00px;top:32px;font-size:9px;line-height:9px;color:#ffffff;transform:scaleX(0.887);-webkit-text-stroke:0.3px currentColor">画面切り替え</div>
<div class="t" style="left:273.28px;top:31px;font-size:9px;line-height:9px;color:#ffffff;transform:scaleX(0.721);-webkit-text-stroke:0.3px currentColor">アニメーション</div>
<div class="t" style="left:337.00px;top:32px;font-size:9px;line-height:9px;color:#ffffff;-webkit-text-stroke:0.3px currentColor">校閲</div>
<div class="t" style="left:375.00px;top:32px;font-size:9px;line-height:9px;color:#ffffff;-webkit-text-stroke:0.3px currentColor">表示</div>
<div class="t" style="left:413.00px;top:32px;font-size:10px;line-height:10px;color:#ffffff;transform:scaleX(0.833);-webkit-text-stroke:0.1px #fff">ACROBAT</div>
<div class="t" style="left:486.00px;top:32px;font-size:9px;line-height:9px;color:#ffffff;transform:scaleX(0.799);-webkit-text-stroke:0.3px currentColor">実行したい作業を入力してください</div>
<div class="t" style="left:969.00px;top:32px;font-size:9px;line-height:9px;color:#ffffff;transform:scaleX(0.944);-webkit-text-stroke:0.3px currentColor">共有</div>
<div class="t" style="left:5.00px;top:77px;font-size:9px;line-height:9px;color:#444444;transform:scaleX(0.833);">貼り付け</div>
<div class="t" style="left:53.00px;top:54px;font-size:9px;line-height:9px;color:#a3a3a3;transform:scaleX(0.853);-webkit-text-stroke:0.15px currentColor">切り取り</div>
<div class="t" style="left:52.27px;top:70px;font-size:9px;line-height:9px;color:#a3a3a3;transform:scaleX(0.731);-webkit-text-stroke:0.15px currentColor">コピー</div>
<div class="t" style="left:53.00px;top:86px;font-size:9px;line-height:9px;color:#a3a3a3;transform:scaleX(0.828);-webkit-text-stroke:0.15px currentColor">書式のコピー/貼り付け</div>
<div class="t" style="left:41.30px;top:104px;font-size:9px;line-height:9px;color:#444444;transform:scaleX(0.705);">クリップボード</div>
<div class="t" style="left:147.00px;top:78px;font-size:9px;line-height:9px;color:#444444;transform:scaleX(0.852);">新しい</div>
<div class="t" style="left:141.24px;top:88px;font-size:9px;line-height:9px;color:#444444;transform:scaleX(0.765);">スライド</div>
<div class="t" style="left:188.50px;top:59px;font-size:9px;line-height:9px;color:#a3a3a3;transform:scaleX(0.750);-webkit-text-stroke:0.15px currentColor">リセット</div>
<div class="t" style="left:191.00px;top:81px;font-size:9px;line-height:9px;color:#a3a3a3;transform:scaleX(0.944);-webkit-text-stroke:0.15px currentColor">削除</div>
<div class="t" style="left:166.24px;top:104px;font-size:9px;line-height:9px;color:#444444;transform:scaleX(0.765);">スライド</div>
<div class="t" style="left:317.00px;top:59px;font-size:10px;line-height:10px;color:#8a8a8a;">18</div>
<div class="t" style="left:296.24px;top:104px;font-size:9px;line-height:9px;color:#444444;transform:scaleX(0.758);">フォント</div>
<div class="t" style="left:543.00px;top:56px;font-size:9px;line-height:9px;color:#a3a3a3;transform:scaleX(0.943);-webkit-text-stroke:0.15px currentColor">文字列の方向</div>
<div class="t" style="left:543.00px;top:72px;font-size:9px;line-height:9px;color:#a3a3a3;transform:scaleX(0.933);-webkit-text-stroke:0.15px currentColor">文字の配置</div>
<div class="t" style="left:543.00px;top:88px;font-size:9px;line-height:9px;color:#a3a3a3;transform:scaleX(1.015);-webkit-text-stroke:0.15px currentColor">SmartArt に変換</div>
<div class="t" style="left:500.00px;top:103px;font-size:9px;line-height:9px;color:#444444;">段落</div>
<div class="t" style="left:733.00px;top:78px;font-size:9px;line-height:9px;color:#444444;transform:scaleX(0.944);">配置</div>
<div class="t" style="left:761.29px;top:78px;font-size:9px;line-height:9px;color:#808080;transform:scaleX(0.706);-webkit-text-stroke:0.25px currentColor">クイック</div>
<div class="t" style="left:756.20px;top:89px;font-size:9px;line-height:9px;color:#808080;transform:scaleX(0.800);-webkit-text-stroke:0.25px currentColor">スタイル</div>
<div class="t" style="left:807.00px;top:55px;font-size:9px;line-height:9px;color:#a3a3a3;transform:scaleX(0.831);-webkit-text-stroke:0.15px currentColor">図形の塗りつぶし</div>
<div class="t" style="left:807.00px;top:71px;font-size:9px;line-height:9px;color:#a3a3a3;transform:scaleX(0.956);-webkit-text-stroke:0.15px currentColor">図形の枠線</div>
<div class="t" style="left:807.00px;top:87px;font-size:9px;line-height:9px;color:#a3a3a3;transform:scaleX(0.956);-webkit-text-stroke:0.15px currentColor">図形の効果</div>
<div class="t" style="left:728.00px;top:103px;font-size:9px;line-height:9px;color:#444444;transform:scaleX(0.944);">図形描画</div>
<div class="t" style="left:897.00px;top:56px;font-size:9px;line-height:9px;color:#444444;">検索</div>
<div class="t" style="left:897.00px;top:72px;font-size:9px;line-height:9px;color:#444444;">置換</div>
<div class="t" style="left:897.00px;top:88px;font-size:9px;line-height:9px;color:#444444;">選択</div>
<div class="t" style="left:897.00px;top:103px;font-size:9px;line-height:9px;color:#444444;transform:scaleX(0.944);">編集</div>
<div class="t" style="left:6.21px;top:699px;font-size:9px;line-height:9px;color:#444444;transform:scaleX(0.792);">ノート</div>
<div class="t" style="left:61.00px;top:700px;font-size:9px;line-height:9px;color:#444444;">日本語</div>
<div class="t" style="left:967.11px;top:698px;font-size:11px;line-height:11px;color:#444444;transform:scaleX(0.889);-webkit-text-stroke:0">109%</div>
<div class="t" style="left:274.91px;top:181px;font-size:19px;line-height:19px;color:#000000;transform:scaleX(1.092);">マスター タイトルの書式設定</div>
<div class="t" style="left:10.17px;top:126px;font-size:12px;line-height:12px;color:#444444;transform:scaleX(0.833);-webkit-text-stroke:0">1</div>
<div class="t" style="left:30.20px;top:138px;font-size:8px;line-height:8px;color:#a0a0a0;transform:scaleX(0.800);-webkit-text-stroke:0.15px #a0a0a0">マスター タイトルの書式設定</div>
<div class="t" style="left:30.00px;top:150px;font-size:6px;line-height:6px;color:#999999;transform:scaleX(0.687);-webkit-text-stroke:0">• マスター テキストの書式設定</div>
<div class="t" style="left:34.00px;top:154px;font-size:5px;line-height:5px;color:#b0b0b0;transform:scaleX(0.759);-webkit-text-stroke:0">• 第 2 レベル</div>
<div class="t" style="left:39.00px;top:159px;font-size:4px;line-height:4px;color:#b8b8b8;transform:scaleX(0.826);-webkit-text-stroke:0">• 第 3 レベル</div>
<div class="t" style="left:44.00px;top:163px;font-size:4px;line-height:4px;color:#b8b8b8;transform:scaleX(0.783);-webkit-text-stroke:0">• 第 4 レベル</div>
<div class="t" style="left:49.00px;top:166px;font-size:4px;line-height:4px;color:#b8b8b8;transform:scaleX(0.783);-webkit-text-stroke:0">• 第 5 レベル</div>
<div class="t" style="left:50.00px;top:228px;font-size:4px;line-height:4px;color:#999999;transform:scaleX(0.755);-webkit-text-stroke:0">マスター タイトルの書式設定</div>
<div class="t" style="left:52.12px;top:315px;font-size:8px;line-height:8px;color:#b8b8b8;transform:scaleX(0.877);-webkit-text-stroke:0">マスター タイトルの</div>
<div class="t" style="left:70.00px;top:324px;font-size:8px;line-height:8px;color:#555555;transform:scaleX(0.906);-webkit-text-stroke:0.3px #555">書式設定</div>
<div class="t" style="left:49.12px;top:404px;font-size:8px;line-height:8px;color:#b8b8b8;transform:scaleX(0.877);-webkit-text-stroke:0">マスター タイトルの</div>
<div class="t" style="left:50.00px;top:412px;font-size:8px;line-height:8px;color:#555555;transform:scaleX(0.844);-webkit-text-stroke:0.3px #555">書式設定</div>
<div class="t" style="left:49.28px;top:462px;font-size:7px;line-height:7px;color:#a8a8a8;transform:scaleX(0.717);-webkit-text-stroke:0">マスター タイトルの書式設定</div>
<div class="t" style="left:49.28px;top:541px;font-size:7px;line-height:7px;color:#a8a8a8;transform:scaleX(0.717);-webkit-text-stroke:0">マスター タイトルの書式設定</div>
<div class="t" style="left:49.28px;top:619px;font-size:7px;line-height:7px;color:#a8a8a8;transform:scaleX(0.717);-webkit-text-stroke:0">マスター タイトルの書式設定</div>

<!-- window borders -->
<div class="a" style="left:0;top:0;width:1px;height:711px;background:#b7472a"></div>
<div class="a" style="left:1023px;top:0;width:1px;height:711px;background:#b7472a"></div>
<div class="a" style="left:1px;top:47px;width:1px;height:664px;background:#f8f8f8"></div>
<div class="a" style="left:1022px;top:47px;width:1px;height:664px;background:#f8f8f8"></div>
</body></html>
